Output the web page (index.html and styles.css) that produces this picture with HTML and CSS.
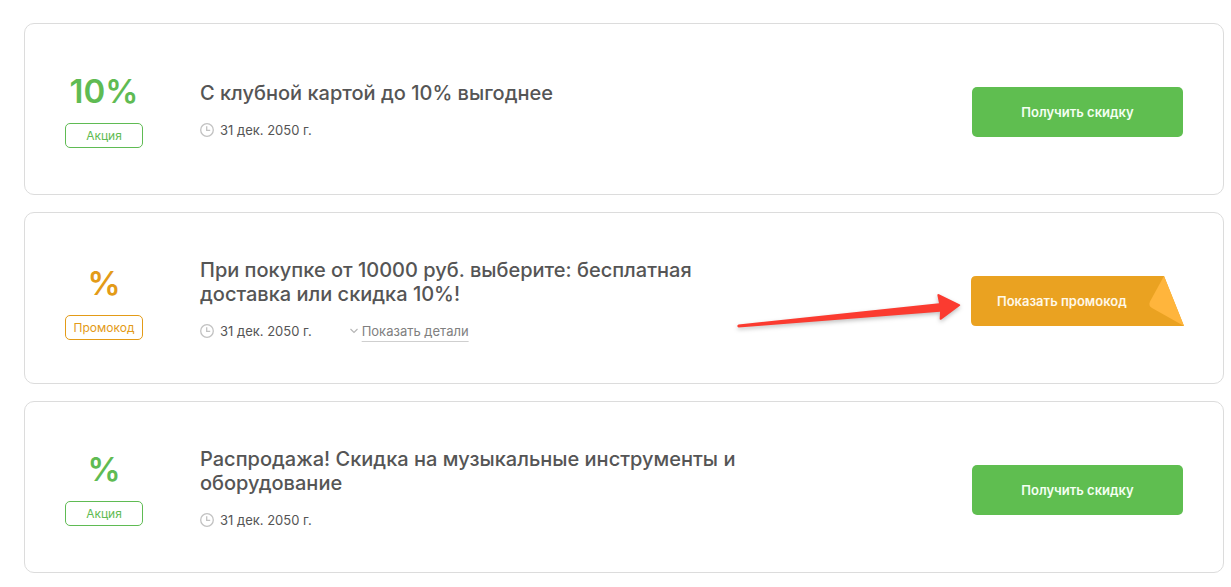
FILE: index.html
```html
<!DOCTYPE html>
<html lang="ru">
<head>
<meta charset="utf-8">
<meta name="viewport" content="width=device-width, initial-scale=1">
<title>Акции и промокоды</title>
<link rel="stylesheet" href="styles.css">
</head>
<body>
<svg class="defs" aria-hidden="true">
  <symbol id="clock" viewBox="0 0 14 14">
    <circle cx="7" cy="7" r="6.3" fill="none" stroke="#c2c2c2" stroke-width="1.3"/>
    <path d="M6.7 3.3V7.4H10.2" fill="none" stroke="#c2c2c2" stroke-width="1.3"/>
  </symbol>
</svg>
<main class="offers">
  <article class="card">
    <div class="badge">
      <div class="value">10%</div>
      <div class="tag">Акция</div>
    </div>
    <div class="info">
      <h2 class="title">С клубной картой до 10% выгоднее</h2>
      <div class="meta">
        <span class="date"><svg class="clock"><use href="#clock"/></svg>31 дек. 2050 г.</span>
      </div>
    </div>
    <div class="action">
      <button class="button" type="button">Получить скидку</button>
    </div>
  </article>

  <article class="card">
    <div class="badge badge-promo">
      <div class="value">%</div>
      <div class="tag">Промокод</div>
    </div>
    <div class="info">
      <h2 class="title">При покупке от 10000 руб. выберите: бесплатная доставка или скидка 10%!</h2>
      <div class="meta">
        <span class="date"><svg class="clock"><use href="#clock"/></svg>31 дек. 2050 г.</span>
        <a class="details" href="#"><svg class="chevron" viewBox="0 0 8 6"><path d="M0.5 1L4 4.5L7.5 1" fill="none" stroke="#b5b5b5" stroke-width="1.1"/></svg><span class="details-text">Показать детали</span></a>
      </div>
    </div>
    <div class="action">
      <svg class="arrow" viewBox="0 0 236 40" aria-hidden="true">
        <path d="M4.500 35.400L205 14.3L203.4 6.6Q203.2 4.6 205 5.3L225.5 15.2Q227 16 225.6 17L207.4 30.6Q205.6 31.4 205.7 29.6L206 22.8L4.500 38.600Q2 37 4.500 35.400Z" fill="#fb3b30"/>
      </svg>
      <button class="button button-promo" type="button">
        <svg class="coupon" viewBox="0 0 213 50" aria-hidden="true">
          <path d="M5 0H193L213 50H5Q0 50 0 45V5Q0 0 5 0Z" fill="#eaa221"/>
          <path d="M193 0L213 50L181 32Q177 29.500 179 25.500Z" fill="#ffb53c"/>
        </svg>
        <span class="button-text">Показать промокод</span>
      </button>
    </div>
  </article>

  <article class="card">
    <div class="badge">
      <div class="value">%</div>
      <div class="tag">Акция</div>
    </div>
    <div class="info">
      <h2 class="title">Распродажа! Скидка на музыкальные инструменты и оборудование</h2>
      <div class="meta">
        <span class="date"><svg class="clock"><use href="#clock"/></svg>31 дек. 2050 г.</span>
      </div>
    </div>
    <div class="action">
      <button class="button" type="button">Получить скидку</button>
    </div>
  </article>
</main>
</body>
</html>
```
FILE: styles.css
```css
* { box-sizing: border-box; }

body {
  margin: 0;
  background: #fff;
  color: #555;
  font-family: Inter, "Liberation Sans", sans-serif;
  font-size: 13px;
  line-height: 18px;
}

.defs {
  position: absolute;
  width: 0;
  height: 0;
}

.offers {
  display: flex;
  flex-direction: column;
  gap: 17px;
  padding: 23px 7px 14px 24px;
}

.card {
  display: flex;
  align-items: center;
  min-height: 172px;
  padding: 6px 39px 0 40px;
  border: 1px solid #dcdcdc;
  border-radius: 10px;
}

.badge {
  flex: none;
  width: 78px;
  margin-right: 57px;
  padding-bottom: 5px;
  color: #5fbb53;
  text-align: center;
}

.badge-promo {
  padding: 1px 0 0;
  color: #e39b17;
}

.value {
  margin-bottom: 12px;
  font-size: 33px;
  font-weight: 600;
  line-height: 40px;
}

.tag {
  border: 1px solid currentColor;
  border-radius: 5px;
  font-size: 12px;
  line-height: 23px;
}

.info {
  flex: 1;
  padding-bottom: 4px;
}

.title {
  max-width: 560px;
  margin: 0 0 16px;
  font-size: 20px;
  font-weight: 500;
  line-height: 24px;
}

.meta {
  display: flex;
  align-items: center;
  gap: 38px;
}

.date {
  display: flex;
  align-items: center;
  gap: 6px;
}

.clock {
  width: 14px;
  height: 14px;
}

.details {
  display: flex;
  align-items: center;
  gap: 4px;
  height: 18px;
  color: #808080;
  text-decoration: none;
}

.chevron {
  width: 8px;
  height: 6px;
}

.details-text {
  text-decoration: underline 1px #cfcfcf;
  text-underline-offset: 5px;
}

.action {
  position: relative;
  flex: none;
  width: 213px;
}

.button {
  display: block;
  width: 211px;
  height: 50px;
  margin: 0 auto;
  padding: 0;
  border: 0;
  border-radius: 5px;
  background: #5fbe50;
  color: #f4fff2;
  font-family: inherit;
  font-size: 13px;
  font-weight: 600;
  cursor: pointer;
}

.button-promo {
  position: relative;
  width: 100%;
  background: none;
  color: #fff8e8;
  text-align: left;
}

.coupon {
  position: absolute;
  inset: 0;
  width: 100%;
  height: 100%;
}

.button-text {
  position: relative;
  padding-left: 26px;
}

.arrow {
  position: absolute;
  top: 13px;
  right: 214px;
  width: 236px;
  height: 40px;
  pointer-events: none;
  filter: drop-shadow(0 2px 2px rgba(0, 0, 0, 0.25));
}
```
